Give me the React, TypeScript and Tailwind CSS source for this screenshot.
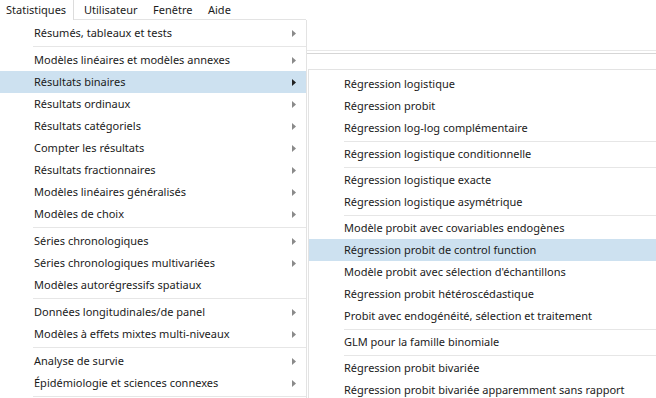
import React from 'react';

type Item = {
    label: string;
    sub?: boolean;
    active?: boolean;
};

const topMenu = [
    { label: 'Statistiques', cls: 'w-[74px] border-r border-[#dcdcdc] pl-[6px]' },
    { label: 'Utilisateur', cls: 'w-[69px] pl-[10px]' },
    { label: 'Fenêtre', cls: 'w-[55px] pl-[10px]' },
    { label: 'Aide', cls: 'pl-[10px]' },
];

const leftGroups: Item[][] = [
    [{ label: 'Résumés, tableaux et tests', sub: true }],
    [
        { label: 'Modèles linéaires et modèles annexes', sub: true },
        { label: 'Résultats binaires', sub: true, active: true },
        { label: 'Résultats ordinaux', sub: true },
        { label: 'Résultats catégoriels', sub: true },
        { label: 'Compter les résultats', sub: true },
        { label: 'Résultats fractionnaires', sub: true },
        { label: 'Modèles linéaires généralisés', sub: true },
        { label: 'Modèles de choix', sub: true },
    ],
    [
        { label: 'Séries chronologiques', sub: true },
        { label: 'Séries chronologiques multivariées', sub: true },
        { label: 'Modèles autorégressifs spatiaux' },
    ],
    [
        { label: 'Données longitudinales/de panel', sub: true },
        { label: 'Modèles à effets mixtes multi-niveaux', sub: true },
    ],
    [
        { label: 'Analyse de survie', sub: true },
        { label: 'Épidémiologie et sciences connexes', sub: true },
    ],
];

const subGroups: Item[][] = [
    [
        { label: 'Régression logistique' },
        { label: 'Régression probit' },
        { label: 'Régression log-log complémentaire' },
    ],
    [{ label: 'Régression logistique conditionnelle' }],
    [
        { label: 'Régression logistique exacte' },
        { label: 'Régression logistique asymétrique' },
    ],
    [
        { label: 'Modèle probit avec covariables endogènes' },
        { label: 'Régression probit de control function', active: true },
        { label: "Modèle probit avec sélection d'échantillons" },
        { label: 'Régression probit hétéroscédastique' },
        { label: 'Probit avec endogénéité, sélection et traitement' },
    ],
    [{ label: 'GLM pour la famille binomiale' }],
    [
        { label: 'Régression probit bivariée' },
        { label: 'Régression probit bivariée apparemment sans rapport' },
    ],
];

const Arrow = ({ dark }: { dark?: boolean }) => (
    <svg width="4" height="7" viewBox="0 0 4 7" className="ml-auto mr-[10px] shrink-0">
        <polygon points="0,0 4,3.5 0,7" fill={dark ? '#222222' : '#8a8a8a'} />
    </svg>
);

const Row = ({ item, pad }: { item: Item; pad: string }) => (
    <div
        className={`flex h-[22px] items-center ${
            item.active ? 'bg-[#cde1f0]' : ''
        }`}
    >
        <span className={pad}>{item.label}</span>
        {item.sub && <Arrow dark={item.active} />}
    </div>
);

const Separator = ({ inset, h }: { inset: string; h: string }) => (
    <div className={`flex items-center ${inset} ${h}`}>
        <div className="h-px w-full bg-[#e6e6e6]" />
    </div>
);

export default function App() {
    return (
        <div
            className="relative h-[398px] w-[656px] overflow-hidden rounded-b-[10px] bg-white text-[11px] text-[#1b1b1b]"
            style={{ fontFamily: '"Noto Sans", "Open Sans", sans-serif' }}
        >
            {/* menu bar */}
            <div className="flex h-[20px] items-stretch">
                {topMenu.map((m) => (
                    <div key={m.label} className={`flex items-center ${m.cls}`}>
                        {m.label}
                    </div>
                ))}
            </div>

            <div className="flex">
                {/* main dropdown */}
                <div className="w-[307px] border-r border-[#e3e3e3]">
                    <div className="-mt-px ml-[74px] h-px bg-[#e3e3e3]" />
                    <div className="pt-[2px]">
                        {leftGroups.map((g, gi) => (
                            <div key={gi}>
                                {gi > 0 && <Separator inset="pl-[33px]" h="h-[5px]" />}
                                {g.map((item) => (
                                    <Row key={item.label} item={item} pad="pl-[34px]" />
                                ))}
                            </div>
                        ))}
                        <Separator inset="pl-[33px]" h="h-[5px]" />
                    </div>
                </div>

                {/* right area with submenu */}
                <div className="flex-1">
                    <div className="h-[30px]" />
                    <div className="h-px bg-[#e8e8e8]" />
                    <div className="h-[2px]" />
                    <div className="h-px bg-[#d6d6d6]" />
                    <div className="h-[15px]" />
                    <div className="ml-px border-l border-t border-[#e3e3e3] pt-[3px]">
                        {subGroups.map((g, gi) => (
                            <div key={gi}>
                                {gi > 0 && <Separator inset="pl-[35px]" h="h-[4px]" />}
                                {g.map((item) => (
                                    <Row key={item.label} item={item} pad="pl-[35px]" />
                                ))}
                            </div>
                        ))}
                    </div>
                </div>
            </div>
        </div>
    );
}
